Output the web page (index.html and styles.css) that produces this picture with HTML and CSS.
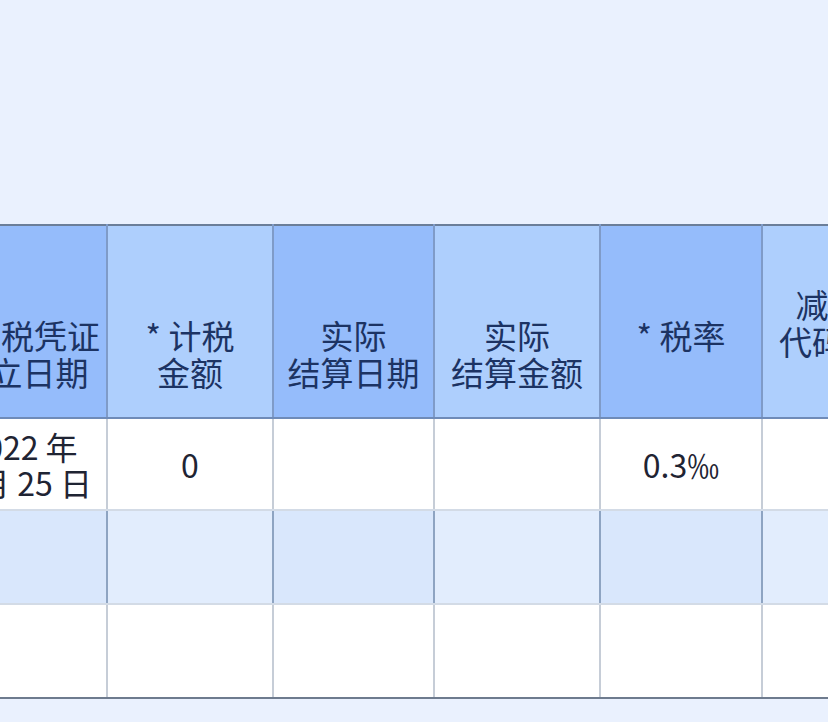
FILE: index.html
```html
<!DOCTYPE html>
<html lang="zh-CN">
<head>
<meta charset="utf-8">
<link rel="stylesheet" href="styles.css">
</head>
<body>
<div class="page">
  <table class="grid">
    <colgroup>
      <col class="w1"><col class="w2"><col class="w3"><col class="w4"><col class="w5"><col class="w6">
    </colgroup>
    <thead>
      <tr>
        <th class="dark">* 应税凭证<br>书立日期</th>
        <th class="light">* 计税<br>金额</th>
        <th class="dark">实际<br>结算日期</th>
        <th class="light">实际<br>结算金额</th>
        <th class="dark">* 税率</th>
        <th class="light high">减免性<br>代码和项</th>
      </tr>
    </thead>
    <tbody>
      <tr class="odd">
        <td>2022 年<br>6 月 25 日</td>
        <td>0</td>
        <td></td>
        <td></td>
        <td>0.3‰</td>
        <td></td>
      </tr>
      <tr class="even">
        <td class="dark"></td>
        <td class="light"></td>
        <td class="dark"></td>
        <td class="light"></td>
        <td class="dark"></td>
        <td class="light"></td>
      </tr>
      <tr class="odd last">
        <td></td><td></td><td></td><td></td><td></td><td></td>
      </tr>
    </tbody>
  </table>
</div>
</body>
</html>
```

FILE: styles.css
```css
html, body {
  margin: 0;
  padding: 0;
  background: #eaf1fe;
  overflow: hidden;
}

.page {
  width: 828px;
  height: 722px;
  overflow: hidden;
  padding-top: 224px;
  box-sizing: border-box;
}

.grid {
  margin-left: -63px;
  border-collapse: collapse;
  table-layout: fixed;
  width: 990px;
  font-family: "Noto Sans CJK SC", "Noto Sans", sans-serif;
}

.w1 { width: 169px; }
.w2 { width: 166px; }
.w3 { width: 161px; }
.w4 { width: 166px; }
.w5 { width: 162px; }
.w6 { width: 166px; }

.grid th {
  height: 193px;
  box-sizing: border-box;
  vertical-align: top;
  padding: 91px 0 0;
  font-size: 33px;
  line-height: 37px;
  font-weight: 400;
  color: #1c3363;
  text-align: center;
  white-space: nowrap;
  border-top: 2px solid #6b7e99;
  border-bottom: 2px solid #6f8bb8;
  border-left: 2px solid #7f9bc8;
  border-right: 2px solid #7f9bc8;
}

.grid th.high {
  padding-top: 60px;
}

.grid th.dark { background: #95bcfb; }
.grid th.light { background: #aecffd; }

.grid td {
  height: 92px;
  box-sizing: border-box;
  padding: 0;
  text-align: center;
  vertical-align: middle;
  font-size: 32px;
  line-height: 36px;
  color: #1f2433;
  white-space: nowrap;
  border-left: 2px solid #c6cdd7;
  border-right: 2px solid #c6cdd7;
  border-bottom: 2px solid #d3dbe6;
}

.grid tr.odd td { background: #ffffff; }

.grid tr.even td {
  height: 94px;
  border-left-color: #8ea4c2;
  border-right-color: #8ea4c2;
}

.grid tr.even td.dark { background: #d9e7fc; }
.grid tr.even td.light { background: #e2edfd; }

.grid tr.last td {
  height: 94px;
  border-bottom: 2px solid #6e7b8e;
}
```
